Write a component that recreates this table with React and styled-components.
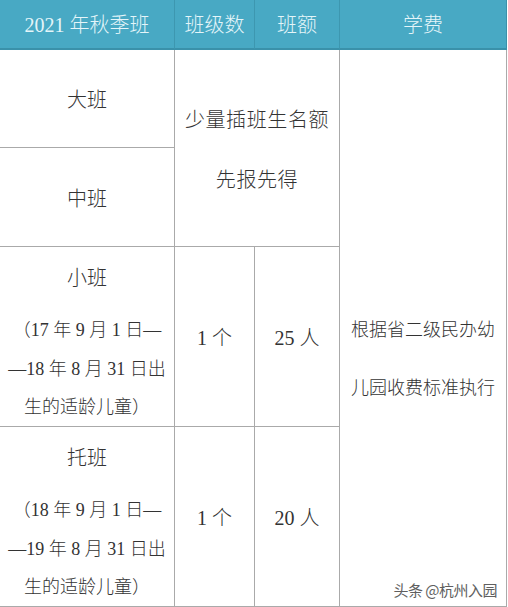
import React from "react";
import styled, { createGlobalStyle } from "styled-components";

const Global = createGlobalStyle`
  html, body { margin: 0; padding: 0; background: #fff; }
  body { width: 508px; height: 607px; overflow: hidden; }
`;

const Table = styled.div`
  position: relative;
  width: 507px;
  display: grid;
  grid-template-columns: 175px 80px 85px 167px;
  grid-template-rows: 50px 98px 99px 180px 180px;
  font-family: "Liberation Serif", "Noto Sans CJK SC", serif;
  font-weight: 300;
  color: #333;
  background: #fff;
`;

const HeadCell = styled.div`
  box-sizing: border-box;
  background: #48a9c4;
  color: #e4f5f9;
  font-size: 20px;
  display: flex;
  align-items: center;
  justify-content: center;
  border-bottom: 2px solid #3a91aa;
  border-right: 1px solid ${(p) => (p.$last ? "#3a91aa" : "#3d97b0")};
  padding-bottom: 2px;
`;

const Cell = styled.div`
  box-sizing: border-box;
  border-right: 1px solid #aaa;
  border-bottom: 1px solid #aaa;
  display: flex;
  flex-direction: column;
  align-items: center;
  justify-content: ${(p) => (p.$top ? "flex-start" : "center")};
  padding-top: ${(p) => p.$pt || 0}px;
  grid-column: ${(p) => p.$col || "auto"};
  grid-row: ${(p) => p.$row || "auto"};
  font-size: 20px;
  text-align: center;
`;

const Line = styled.div`
  line-height: ${(p) => p.$lh || 38}px;
  letter-spacing: ${(p) => p.$ls || 0}px;
  font-size: ${(p) => p.$fs || 20}px;
  white-space: nowrap;
`;

const Title = styled.div`
  font-size: 20px;
  line-height: 38px;
  margin-bottom: 14px;
`;

const Note = styled.div`
  font-size: 18px;
  line-height: 38.5px;
  white-space: nowrap;
`;

const Watermark = styled.div`
  position: absolute;
  right: 10px;
  bottom: 7px;
  font-family: "Noto Sans CJK SC", sans-serif;
  font-weight: 400;
  font-size: 15px;
  color: #444;
  opacity: 0.85;
  letter-spacing: -0.5px;
`;

const kids = [
  {
    name: "小班",
    note: ["（17 年 9 月 1 日—", "—18 年 8 月 31 日出", "生的适龄儿童）"],
    classes: "1 个",
    size: "25 人",
    row: "4",
  },
  {
    name: "托班",
    note: ["（18 年 9 月 1 日—", "—19 年 8 月 31 日出", "生的适龄儿童）"],
    classes: "1 个",
    size: "20 人",
    row: "5",
  },
];

export default function App() {
  return (
    <>
      <Global />
      <Table>
        <HeadCell>2021 年秋季班</HeadCell>
        <HeadCell>班级数</HeadCell>
        <HeadCell>班额</HeadCell>
        <HeadCell $last>学费</HeadCell>

        <Cell $col="1" $row="2">大班</Cell>
        <Cell $col="2 / span 2" $row="2 / span 2" $pt={3}>
          <Line $lh={60} $ls={0.6}>少量插班生名额</Line>
          <Line $lh={60} $ls={0.6}>先报先得</Line>
        </Cell>
        <Cell $col="4" $row="2 / span 4" $pt={61}>
          <Line $lh={58} $fs={18}>根据省二级民办幼</Line>
          <Line $lh={58} $fs={18}>儿园收费标准执行</Line>
        </Cell>
        <Cell $col="1" $row="3">中班</Cell>

        {kids.map((k) => (
          <React.Fragment key={k.name}>
            <Cell $col="1" $row={k.row} $top $pt={12}>
              <Title>{k.name}</Title>
              {k.note.map((n) => (
                <Note key={n}>{n}</Note>
              ))}
            </Cell>
            <Cell $col="2" $row={k.row}>{k.classes}</Cell>
            <Cell $col="3" $row={k.row}>{k.size}</Cell>
          </React.Fragment>
        ))}
        <Watermark>头条 @杭州入园</Watermark>
      </Table>
    </>
  );
}
